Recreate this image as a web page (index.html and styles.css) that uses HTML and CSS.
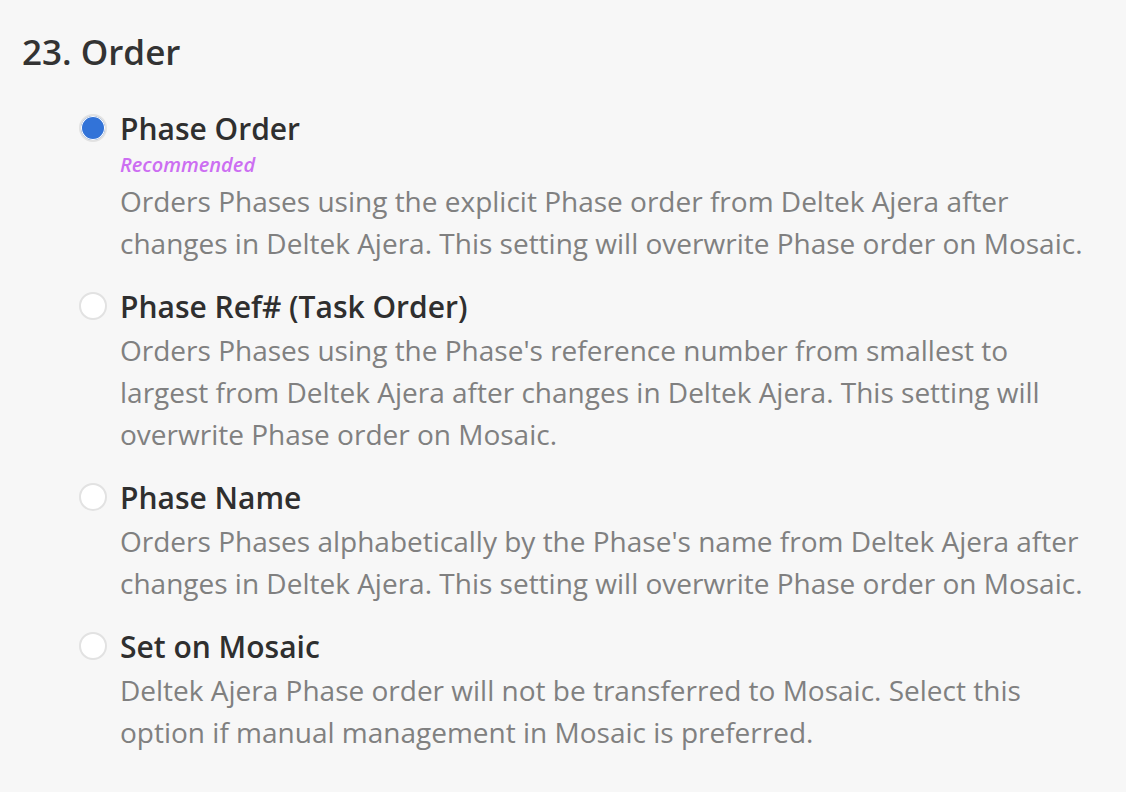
FILE: index.html
```html
<!DOCTYPE html>
<html>
<head>
<meta charset="utf-8">
<link rel="stylesheet" href="styles.css">
</head>
<body>
<section class="setting">
  <h2 class="setting-title"><span class="num">23.</span> Order</h2>
  <div class="options">
    <label class="option">
      <span class="radio checked"></span>
      <span class="option-body">
        <span class="option-label">Phase Order</span>
        <span class="option-tag">Recommended</span>
        <span class="option-desc">Orders Phases using the explicit Phase order from Deltek Ajera after changes in Deltek Ajera. This setting will overwrite Phase order on Mosaic.</span>
      </span>
    </label>
    <label class="option">
      <span class="radio"></span>
      <span class="option-body">
        <span class="option-label">Phase Ref# (Task Order)</span>
        <span class="option-desc">Orders Phases using the Phase's reference number from smallest to largest from Deltek Ajera after changes in Deltek Ajera. This setting will overwrite Phase order on Mosaic.</span>
      </span>
    </label>
    <label class="option">
      <span class="radio"></span>
      <span class="option-body">
        <span class="option-label">Phase Name</span>
        <span class="option-desc">Orders Phases alphabetically by the Phase's name from Deltek Ajera after changes in Deltek Ajera. This setting will overwrite Phase order on Mosaic.</span>
      </span>
    </label>
    <label class="option">
      <span class="radio"></span>
      <span class="option-body">
        <span class="option-label">Set on Mosaic</span>
        <span class="option-desc">Deltek Ajera Phase order will not be transferred to Mosaic. Select this option if manual management in Mosaic is preferred.</span>
      </span>
    </label>
  </div>
</section>
</body>
</html>
```
FILE: styles.css
```css
html, body {
  margin: 0;
  padding: 0;
  background: #f7f7f7;
}
body {
  font-family: "Open Sans", "Liberation Sans", sans-serif;
  color: #333;
}
.setting {
  padding: 28px 0 0 22px;
}
.setting-title {
  margin: 0;
  font-size: 35px;
  font-weight: 600;
  line-height: 48px;
  color: #333;
}
.options {
  display: flex;
  flex-direction: column;
  gap: 20px;
  padding-left: 57px;
  margin-top: 30px;
  width: 1010px;
}
.option {
  display: flex;
  align-items: flex-start;
  gap: 13px;
}
.radio {
  flex: none;
  box-sizing: border-box;
  width: 28px;
  height: 28px;
  margin-top: 8px;
  border-radius: 50%;
  border: 2px solid #e2e2e2;
  background: #fff;
}
.radio.checked {
  background: #3273d8;
  box-shadow: inset 0 0 0 1px #fff;
}
.option-body {
  flex: 1;
  display: flex;
  flex-direction: column;
}
.option-label {
  font-size: 30px;
  font-weight: 600;
  line-height: 45px;
  color: #2f2f2f;
}
.option-tag {
  font-size: 20px;
  font-style: italic;
  font-weight: 600;
  line-height: 26px;
  color: #cc6ef2;
  margin-top: 1px;
  margin-bottom: 2px;
}
.option-desc {
  font-size: 28px;
  line-height: 42px;
  color: #808080;
}
```
